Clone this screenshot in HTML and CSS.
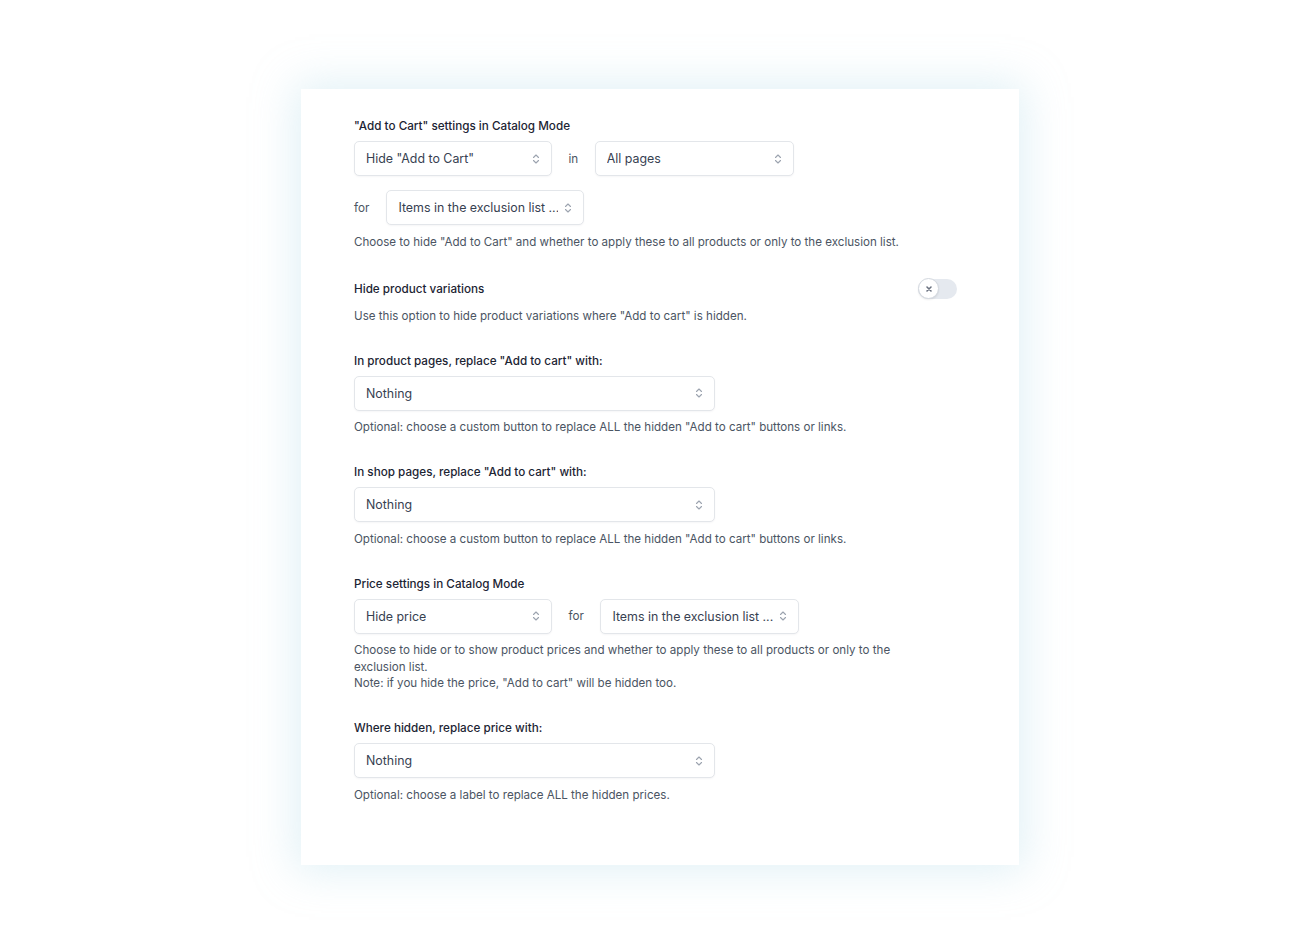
FILE: index.html
```html
<!DOCTYPE html>
<html>
<head>
<meta charset="utf-8">
<link rel="stylesheet" href="styles.css">
</head>
<body>
<div class="card">
  <section class="field">
    <div class="label">"Add to Cart" settings in Catalog Mode</div>
    <div class="row">
      <div class="select w197"><span class="val">Hide "Add to Cart"</span><svg class="chev" viewBox="0 0 8 12"><path d="M1.5 4.5L4 2L6.5 4.5M1.5 7.5L4 10L6.5 7.5"/></svg></div>
      <span class="join">in</span>
      <div class="select w198"><span class="val">All pages</span><svg class="chev" viewBox="0 0 8 12"><path d="M1.5 4.5L4 2L6.5 4.5M1.5 7.5L4 10L6.5 7.5"/></svg></div>
    </div>
    <div class="row row2">
      <span class="join first">for</span>
      <div class="select w197"><span class="val">Items in the exclusion list ...</span><svg class="chev" viewBox="0 0 8 12"><path d="M1.5 4.5L4 2L6.5 4.5M1.5 7.5L4 10L6.5 7.5"/></svg></div>
    </div>
    <p class="desc">Choose to hide "Add to Cart" and whether to apply these to all products or only to the exclusion list.</p>
  </section>

  <section class="field">
    <div class="toggle-row">
      <div class="label">Hide product variations</div>
      <div class="toggle"><div class="knob"><svg viewBox="0 0 10 10"><path d="M3 3L7 7M7 3L3 7"/></svg></div></div>
    </div>
    <p class="desc tight">Use this option to hide product variations where "Add to cart" is hidden.</p>
  </section>

  <section class="field">
    <div class="label">In product pages, replace "Add to cart" with:</div>
    <div class="row">
      <div class="select w360"><span class="val">Nothing</span><svg class="chev" viewBox="0 0 8 12"><path d="M1.5 4.5L4 2L6.5 4.5M1.5 7.5L4 10L6.5 7.5"/></svg></div>
    </div>
    <p class="desc">Optional: choose a custom button to replace ALL the hidden "Add to cart" buttons or links.</p>
  </section>

  <section class="field">
    <div class="label">In shop pages, replace "Add to cart" with:</div>
    <div class="row">
      <div class="select w360"><span class="val">Nothing</span><svg class="chev" viewBox="0 0 8 12"><path d="M1.5 4.5L4 2L6.5 4.5M1.5 7.5L4 10L6.5 7.5"/></svg></div>
    </div>
    <p class="desc">Optional: choose a custom button to replace ALL the hidden "Add to cart" buttons or links.</p>
  </section>

  <section class="field">
    <div class="label">Price settings in Catalog Mode</div>
    <div class="row">
      <div class="select w197"><span class="val">Hide price</span><svg class="chev" viewBox="0 0 8 12"><path d="M1.5 4.5L4 2L6.5 4.5M1.5 7.5L4 10L6.5 7.5"/></svg></div>
      <span class="join">for</span>
      <div class="select w198"><span class="val">Items in the exclusion list ...</span><svg class="chev" viewBox="0 0 8 12"><path d="M1.5 4.5L4 2L6.5 4.5M1.5 7.5L4 10L6.5 7.5"/></svg></div>
    </div>
    <p class="desc">Choose to hide or to show product prices and whether to apply these to all products or only to the exclusion list.<br>Note: if you hide the price, "Add to cart" will be hidden too.</p>
  </section>

  <section class="field last">
    <div class="label">Where hidden, replace price with:</div>
    <div class="row">
      <div class="select w360"><span class="val">Nothing</span><svg class="chev" viewBox="0 0 8 12"><path d="M1.5 4.5L4 2L6.5 4.5M1.5 7.5L4 10L6.5 7.5"/></svg></div>
    </div>
    <p class="desc">Optional: choose a label to replace ALL the hidden prices.</p>
  </section>
</div>
</body>
</html>
```

FILE: styles.css
```css
* { box-sizing: border-box; }
html, body { margin: 0; padding: 0; background: #ffffff; }
body {
  font-family: Inter, "Noto Sans", "Liberation Sans", sans-serif;
  color: #1f2937;
  padding-bottom: 78px;
}
.card {
  width: 718px;
  height: 776px;
  margin: 89px 0 0 301px;
  background: #fff;
  padding: 29px 53px 0 53px;
  box-shadow: 0 0 40px 6px rgba(170, 215, 228, 0.35);
}
.field { margin-bottom: 28.5px; }
.label {
  font-size: 11.7px;
  line-height: 16px;
  font-weight: 500;
  color: #1c2433;
}
.row {
  display: flex;
  align-items: center;
  margin-top: 7px;
}
.row2 { margin-top: 14px; }
.select {
  height: 35px;
  border: 1px solid #e3e6ea;
  border-radius: 5px;
  box-shadow: 0 1px 2px rgba(16, 24, 40, 0.04);
  display: flex;
  align-items: center;
  justify-content: space-between;
  padding: 0 11px 0 11px;
  font-size: 12.4px;
  color: #374151;
  background: #fff;
}
.val {
  white-space: nowrap;
  overflow: hidden;
}
.w197 { width: 198px; }
.w198 { width: 199px; }
.w360 { width: 361px; }
.chev {
  width: 8px;
  height: 12px;
  fill: none;
  stroke: #9ca3af;
  stroke-width: 1.1;
  stroke-linecap: round;
  stroke-linejoin: round;
  flex: none;
  margin-left: 6px;
}
.join {
  font-size: 11.7px;
  color: #4b5563;
  margin: 0 16.5px;
}
.join.first { margin: 0 17px 0 0; }
.desc {
  margin: 8.5px 0 0;
  font-size: 11.6px;
  line-height: 16.5px;
  color: #4b5563;
  max-width: 560px;
}
.desc.tight { margin-top: 9px; }
.toggle-row {
  display: flex;
  align-items: center;
  justify-content: space-between;
  margin-right: 9px;
  margin-top: 3.5px;
}
.toggle {
  width: 39px;
  height: 20px;
  border-radius: 10px;
  background: #e5e9ef;
  position: relative;
}
.knob {
  position: absolute;
  left: 0;
  top: -0.5px;
  width: 21px;
  height: 21px;
  border-radius: 50%;
  background: #fff;
  border: 1px solid #d3d8df;
  box-shadow: 0 1px 2px rgba(0,0,0,0.08);
  display: flex;
  align-items: center;
  justify-content: center;
}
.knob svg {
  width: 10px;
  height: 10px;
  fill: none;
  stroke: #6b7280;
  stroke-width: 1.6;
  stroke-linecap: round;
}
```
